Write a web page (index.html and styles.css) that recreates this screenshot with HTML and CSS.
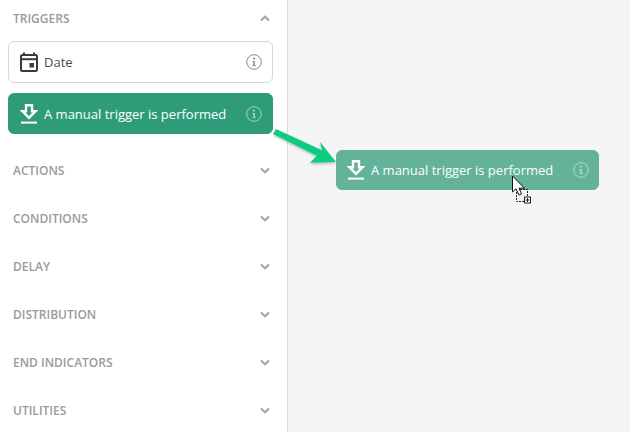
FILE: index.html
```html
<!DOCTYPE html>
<html>
<head>
    <title>Triggers</title>
    <link rel="stylesheet" href="styles.css">
</head>
<body>
    <svg width="0" height="0" class="defs">
        <symbol id="icon-info" viewBox="0 0 16 16">
            <circle cx="8" cy="8" r="7.3" fill="none" stroke="currentColor" stroke-width="1"/>
            <circle cx="8" cy="4.6" r="1.1" fill="currentColor"/>
            <path d="M6.4 6.9H8.9V11.2H10V12.1H6.2V11.2H7.3V7.8H6.4Z" fill="currentColor"/>
        </symbol>
        <symbol id="icon-download" viewBox="0 0 18 20">
            <path d="M6 1.2H12V7.2H15.6L9 13.8L2.4 7.2H6Z" fill="none" stroke="currentColor" stroke-width="2.4"/>
            <path d="M1 18.6H17" fill="none" stroke="currentColor" stroke-width="2"/>
        </symbol>
    </svg>

    <div class="sidebar">
        <div class="section">
            <div class="section-head">
                <span>TRIGGERS</span>
                <svg class="chevron" viewBox="0 0 10 7"><path d="M1 5.5L5 1.7L9 5.5"/></svg>
            </div>
            <div class="section-body">
                <div class="card">
                    <svg class="card-icon" viewBox="0 0 18 20">
                        <path d="M4 0.5V3.5M14 0.5V3.5" fill="none" stroke="currentColor" stroke-width="2"/>
                        <rect x="1" y="3" width="16" height="16" rx="1.5" fill="none" stroke="currentColor" stroke-width="2"/>
                        <path d="M1 7.2H17" fill="none" stroke="currentColor" stroke-width="2"/>
                        <rect x="9.5" y="11" width="4.5" height="4.5" fill="currentColor"/>
                    </svg>
                    <span class="card-label">Date</span>
                    <svg class="info"><use href="#icon-info"/></svg>
                </div>
                <div class="card card-green">
                    <svg class="card-icon"><use href="#icon-download"/></svg>
                    <span class="card-label">A manual trigger is performed</span>
                    <svg class="info"><use href="#icon-info"/></svg>
                </div>
            </div>
        </div>
        <div class="section">
            <div class="section-head"><span>ACTIONS</span><svg class="chevron" viewBox="0 0 10 7"><path d="M1 1.5L5 5.3L9 1.5"/></svg></div>
        </div>
        <div class="section">
            <div class="section-head"><span>CONDITIONS</span><svg class="chevron" viewBox="0 0 10 7"><path d="M1 1.5L5 5.3L9 1.5"/></svg></div>
        </div>
        <div class="section">
            <div class="section-head"><span>DELAY</span><svg class="chevron" viewBox="0 0 10 7"><path d="M1 1.5L5 5.3L9 1.5"/></svg></div>
        </div>
        <div class="section">
            <div class="section-head"><span>DISTRIBUTION</span><svg class="chevron" viewBox="0 0 10 7"><path d="M1 1.5L5 5.3L9 1.5"/></svg></div>
        </div>
        <div class="section">
            <div class="section-head"><span>END INDICATORS</span><svg class="chevron" viewBox="0 0 10 7"><path d="M1 1.5L5 5.3L9 1.5"/></svg></div>
        </div>
        <div class="section">
            <div class="section-head"><span>UTILITIES</span><svg class="chevron" viewBox="0 0 10 7"><path d="M1 1.5L5 5.3L9 1.5"/></svg></div>
        </div>
    </div>

    <div class="canvas"></div>

    <!-- dragged copy of the card -->
    <div class="card card-drag">
        <svg class="card-icon"><use href="#icon-download"/></svg>
        <span class="card-label">A manual trigger is performed</span>
        <svg class="info"><use href="#icon-info"/></svg>
    </div>

    <svg class="arrow" width="70" height="42" viewBox="0 0 70 42">
        <defs>
            <filter id="arrow-shadow" x="-20%" y="-20%" width="140%" height="150%">
                <feDropShadow dx="0" dy="1.5" stdDeviation="1.2" flood-color="#000" flood-opacity="0.25"/>
            </filter>
        </defs>
        <path d="M3 0L49 21.3L47 13L63 33L37 33.7L43.7 26.8L0 5Z" fill="#10cc80" filter="url(#arrow-shadow)"/>
    </svg>

    <svg class="cursor" width="22" height="30" viewBox="0 0 22 30">
        <path d="M5.5 17V26.5H13" fill="none" stroke="#222" stroke-width="1" stroke-dasharray="2 1"/>
        <path d="M9 14.5H16.5V21" fill="none" stroke="#222" stroke-width="1" stroke-dasharray="2 1"/>
        <rect x="13.5" y="22" width="6" height="6" fill="#fff" stroke="#222" stroke-width="1"/>
        <path d="M16.5 23V27M14.5 25H18.5" stroke="#222" stroke-width="1"/>
        <path d="M1.5 1V17L5 13.8L8 20L10.5 19L8 13.2H13.5Z" fill="#fff" stroke="#111" stroke-width="1"/>
    </svg>
</body>
</html>
```

FILE: styles.css
```css
html, body { margin: 0; padding: 0; }
body {
    width: 630px;
    height: 432px;
    overflow: hidden;
    display: flex;
    font-family: "Open Sans", sans-serif;
    background: #fff;
    position: relative;
}
.defs { position: absolute; }

.sidebar {
    width: 288px;
    height: 432px;
    flex-shrink: 0;
    box-sizing: border-box;
    padding: 0 14px 0 8px;
    border-right: 1px solid #d9d9d9;
    overflow: hidden;
}
.canvas { flex: 1; background: #f5f5f5; }

.section { padding-bottom: 12px; }
.section-head {
    height: 36px;
    display: flex;
    align-items: center;
    justify-content: space-between;
    padding: 0 3px 0 5px;
    font-size: 12px;
    font-weight: 600;
    color: #9a9a9a;
}
.chevron { width: 10px; height: 7px; }
.chevron path { fill: none; stroke: #a3a3a3; stroke-width: 2; }
.section-body {
    display: flex;
    flex-direction: column;
    gap: 10px;
    padding: 5px 0 6px;
}

.card {
    height: 42px;
    box-sizing: border-box;
    display: flex;
    align-items: center;
    padding: 0 10px 0 11px;
    border: 1px solid #d6d6d6;
    border-radius: 6px;
    background: #fff;
    color: #4a4a4a;
    font-size: 13px;
}
.card-icon { width: 18px; height: 20px; margin-right: 6px; flex-shrink: 0; color: #3a3a3a; }
.card-label { flex: 1; white-space: nowrap; }
.info { width: 16px; height: 16px; flex-shrink: 0; color: #8a8a8a; }

.card-green {
    height: 41px;
    border-color: #2e9c78;
    background: #2e9c78;
    color: #fff;
}
.card-green .card-icon { color: #fff; }
.card-green .info { color: #a5d6c5; }

.card-drag {
    position: absolute;
    left: 336px;
    top: 150px;
    width: 263px;
    height: 40px;
    padding: 0 9px 0 10px;
    border-color: #63b299;
    background: #63b299;
    color: #fff;
}
.card-drag .card-icon { color: #fff; }
.card-drag .info { color: #b3dbcd; }

.arrow { position: absolute; left: 273px; top: 129px; }
.cursor { position: absolute; left: 511px; top: 175px; }
```
